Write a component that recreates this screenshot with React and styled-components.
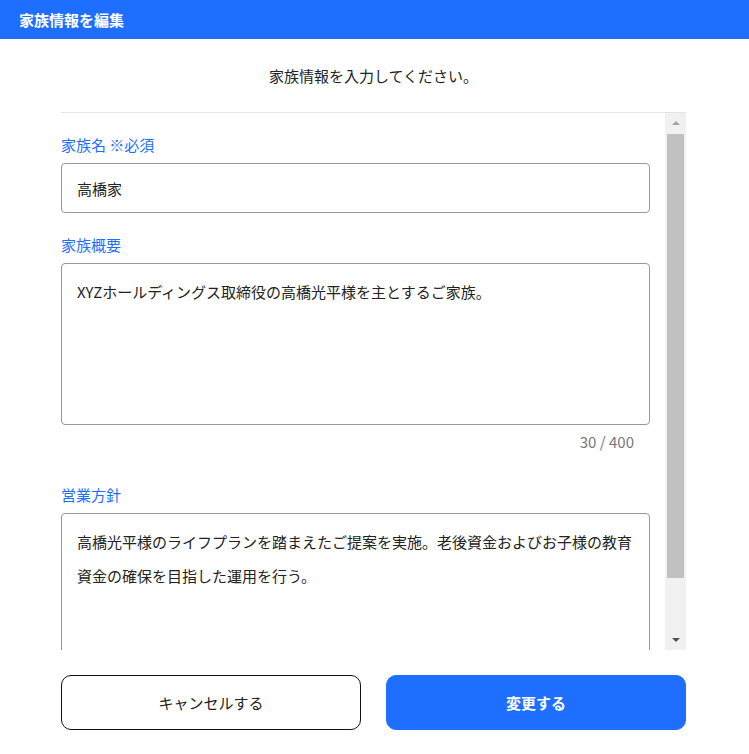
import React, { useState } from 'react';
import styled, { createGlobalStyle } from 'styled-components';

const GlobalStyle = createGlobalStyle`
  * {
    box-sizing: border-box;
  }
  body {
    margin: 0;
    background: #fff;
    font-family: 'Noto Sans CJK JP', 'Noto Sans', sans-serif;
    color: #222;
  }
`;

const Modal = styled.div`
  width: 749px;
  height: 754px;
  background: #fff;
  display: flex;
  flex-direction: column;
`;

const Header = styled.header`
  height: 39px;
  background: #1e6fff;
  color: #fff;
  font-size: 15px;
  font-weight: 700;
  display: flex;
  align-items: center;
  padding: 0 19px;
`;

const Body = styled.div`
  width: 625px;
  margin-left: 61px;
  display: flex;
  flex-direction: column;
`;

const Lead = styled.p`
  margin: 0;
  height: 74px;
  display: flex;
  align-items: center;
  justify-content: center;
  font-size: 15px;
  color: #222;
  border-bottom: 1px solid #e4e4e4;
`;

const Scroller = styled.div`
  height: 537px;
  display: flex;
`;

const Viewport = styled.div`
  flex: 1;
  overflow-y: auto;
  scrollbar-width: none;
  padding: 22px 15px 10px 0;
`;

const Track = styled.div`
  width: 21px;
  background: #f1f1f1;
  display: flex;
  flex-direction: column;
`;

const Arrow = styled.div`
  height: 21px;
  display: flex;
  align-items: center;
  justify-content: center;
  &::before {
    content: '';
    border-left: 4px solid transparent;
    border-right: 4px solid transparent;
    ${(p) =>
      p.$down
        ? 'border-top: 4px solid #505050; margin-top: 1px;'
        : 'border-bottom: 4px solid #a3a3a3; margin-top: -1px;'}
  }
`;

const ThumbArea = styled.div`
  flex: 1;
  padding: 0 2px;
`;

const Thumb = styled.div`
  height: 444px;
  background: #c1c1c1;
`;

const Field = styled.div`
  display: flex;
  flex-direction: column;
  margin-bottom: ${(p) => p.$gap}px;
`;

const Label = styled.label`
  font-size: 15px;
  line-height: 20px;
  color: #1e6fff;
  margin-bottom: 8px;
`;

const TextInput = styled.input`
  height: 50px;
  border: 1px solid #999;
  border-radius: 4px;
  padding: 0 15px;
  font-family: inherit;
  font-size: 15px;
  color: #222;
  outline: none;
`;

const TextArea = styled.textarea`
  height: 162px;
  border: 1px solid #999;
  border-radius: 4px;
  padding: 11px 15px;
  font-family: inherit;
  font-size: 15px;
  line-height: 34px;
  color: #222;
  resize: none;
  outline: none;
`;

const Counter = styled.div`
  margin-top: 7px;
  padding-right: 16px;
  text-align: right;
  font-size: 15px;
  line-height: 20px;
  color: #777;
`;

const Footer = styled.div`
  display: flex;
  gap: 25px;
  padding-top: 25px;
`;

const Button = styled.button`
  width: 300px;
  height: 55px;
  border-radius: 10px;
  font-family: inherit;
  font-size: 15px;
  font-weight: ${(p) => (p.$primary ? 700 : 400)};
  border: 1px solid ${(p) => (p.$primary ? '#1e6fff' : '#111')};
  background: ${(p) => (p.$primary ? '#1e6fff' : '#fff')};
  color: ${(p) => (p.$primary ? '#fff' : '#222')};
  cursor: pointer;
`;

export default function App() {
  const [name, setName] = useState('高橋家');
  const [summary, setSummary] = useState(
    'XYZホールディングス取締役の高橋光平様を主とするご家族。'
  );
  const [policy, setPolicy] = useState(
    '高橋光平様のライフプランを踏まえたご提案を実施。老後資金およびお子様の教育資金の確保を目指した運用を行う。'
  );

  return (
    <>
      <GlobalStyle />
      <Modal>
        <Header>家族情報を編集</Header>
        <Body>
          <Lead>家族情報を入力してください。</Lead>
          <Scroller>
            <Viewport>
              <Field $gap={22}>
                <Label>家族名 ※必須</Label>
                <TextInput value={name} onChange={(e) => setName(e.target.value)} />
              </Field>
              <Field $gap={33}>
                <Label>家族概要</Label>
                <TextArea value={summary} onChange={(e) => setSummary(e.target.value)} />
                <Counter>30 / 400</Counter>
              </Field>
              <Field $gap={0}>
                <Label>営業方針</Label>
                <TextArea value={policy} onChange={(e) => setPolicy(e.target.value)} />
                <Counter>{policy.length} / 400</Counter>
              </Field>
            </Viewport>
            <Track>
              <Arrow />
              <ThumbArea>
                <Thumb />
              </ThumbArea>
              <Arrow $down />
            </Track>
          </Scroller>
          <Footer>
            <Button>キャンセルする</Button>
            <Button $primary>変更する</Button>
          </Footer>
        </Body>
      </Modal>
    </>
  );
}
